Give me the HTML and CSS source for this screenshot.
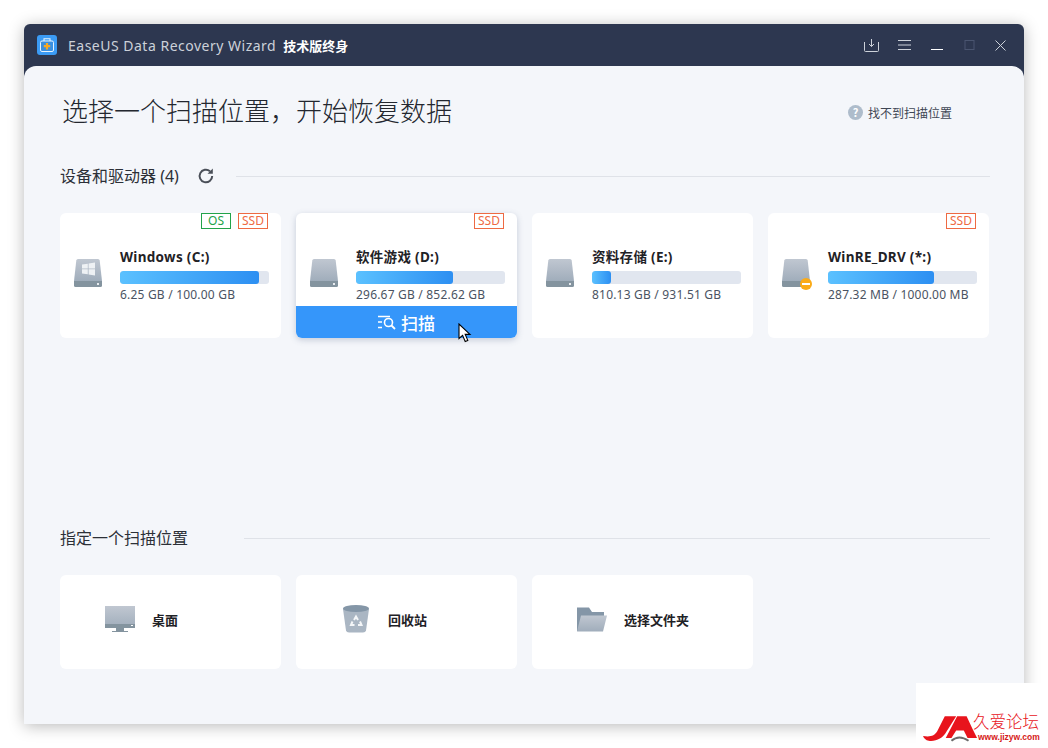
FILE: index.html
```html
<!DOCTYPE html>
<html lang="zh">
<head>
<meta charset="utf-8">
<title>EaseUS Data Recovery Wizard</title>
<link rel="stylesheet" href="styles.css">
</head>
<body>
<svg class="defs" width="0" height="0" aria-hidden="true">
  <defs>
    <linearGradient id="g" x1="0" y1="0" x2="0" y2="1"><stop offset="0" stop-color="#c0c7d1"/><stop offset="1" stop-color="#a0adbb"/></linearGradient>
    <symbol id="hdd" viewBox="0 0 28 28">
      <path d="M4 0H24Q25.500 0 25.700 1.500L28 22H0L2.300 1.500Q2.500 0 4 0Z" fill="url(#g)"/>
      <path d="M0 22H28V26.500Q28 28 26.500 28H1.500Q0 28 0 26.500Z" fill="#84949f"/>
      <rect x="23" y="24" width="2" height="2" fill="#e8ecf0"/>
    </symbol>
  </defs>
</svg>
<div class="window">
  <header class="titlebar">
    <svg class="app-icon" viewBox="0 0 20 20"><rect width="20" height="20" rx="3" fill="#3b9bf5"/><rect x="3.500" y="6" width="13" height="10.500" rx="1.500" fill="#3a8fe0" stroke="#e6f3fd" stroke-width="1"/><path d="M7 6V3.800H13V6" fill="none" stroke="#e6f3fd" stroke-width="1.100"/><path d="M10 8V14.500M6.800 11.200H13.200" stroke="#f7a823" stroke-width="2.200"/></svg>
    <span class="app-name">EaseUS Data Recovery Wizard</span>
    <span class="app-edition">技术版终身</span>
    <div class="win-controls">
      <svg class="ctl" width="15" height="13" viewBox="0 0 15 13"><path d="M.5 3V11.500Q.5 12.500 1.500 12.500H13.500Q14.500 12.500 14.500 11.500V3M7.500 0V7.500M5 5L7.500 7.500L10 5" fill="none" stroke="#cdd2da" stroke-width="1"/></svg>
      <svg class="ctl" width="13" height="12" viewBox="0 0 13 12"><path d="M0 1.500H13M0 6H13M0 10.500H13" stroke="#cdd2da" stroke-width="1"/></svg>
      <svg class="ctl" width="12" height="12" viewBox="0 0 12 12"><path d="M0 10.500H12" stroke="#ffffff" stroke-width="1"/></svg>
      <svg class="ctl" width="11" height="11" viewBox="0 0 11 11"><rect x="1" y=".5" width="9" height="9" fill="none" stroke="#4a5570" stroke-width="1"/></svg>
      <svg class="ctl" width="11" height="11" viewBox="0 0 11 11"><path d="M.5 .5L10.500 10.500M10.500 .5L.5 10.500" stroke="#cdd2da" stroke-width="1"/></svg>
    </div>
  </header>
  <main class="content">
    <div class="top">
      <h1 class="headline">选择一个扫描位置，开始恢复数据</h1>
      <a class="help"><span class="help-dot">?</span>找不到扫描位置</a>
    </div>
    <div class="section-head first">
      <span class="section-title">设备和驱动器 (4)</span>
      <svg class="refresh" width="18" height="18" viewBox="0 0 18 18"><path d="M15.200 9A6.300 6.300 0 1 1 13 4.200" fill="none" stroke="#4a4f58" stroke-width="2"/><path d="M15.800 1.500V6.800H10.500Z" fill="#4a4f58"/></svg>
      <span class="rule"></span>
    </div>
    <div class="drives">
      <article class="card drive">
        <div class="tags"><span class="tag os">OS</span><span class="tag ssd">SSD</span></div>
        <div class="drive-body">
          <svg class="hdd"><use href="#hdd"/></svg>
          <div class="drive-info">
            <div class="drive-name">Windows (C:)</div>
            <div class="bar"><div class="fill" style="width:93%"></div></div>
            <div class="drive-size">6.25 GB / 100.00 GB</div>
          </div>
        </div>
        <svg class="win-logo" width="13" height="14" viewBox="0 0 13 13"><path d="M0 2L5.800 1.200V6H0ZM6.600 1L13 0V6H6.600ZM0 6.800H5.800V11.700L0 11ZM6.600 6.800H13V13L6.600 12Z" fill="#eef1f4"/></svg>
      </article>
      <article class="card drive active">
        <div class="tags"><span class="tag ssd">SSD</span></div>
        <div class="drive-body">
          <svg class="hdd"><use href="#hdd"/></svg>
          <div class="drive-info">
            <div class="drive-name">软件游戏 (D:)</div>
            <div class="bar"><div class="fill" style="width:65%"></div></div>
            <div class="drive-size">296.67 GB / 852.62 GB</div>
          </div>
        </div>
        <div class="scan">
          <svg width="18" height="15" viewBox="0 0 18 15"><path d="M0 1.500H12M0 7H4M0 12.500H4" stroke="#fff" stroke-width="1.600"/><circle cx="10.500" cy="7.500" r="4" fill="none" stroke="#fff" stroke-width="1.600"/><path d="M13.500 10.500L17 14" stroke="#fff" stroke-width="1.800"/></svg>
          <span>扫描</span>
        </div>
        <svg class="cursor" width="14" height="20" viewBox="0 0 14 20"><path d="M1 1V15.500L4.600 12.300L7.200 18.500L9.800 17.400L7.200 11.400H12Z" fill="#fff" stroke="#000" stroke-width="1.100"/></svg>
      </article>
      <article class="card drive">
        <div class="drive-body">
          <svg class="hdd"><use href="#hdd"/></svg>
          <div class="drive-info">
            <div class="drive-name">资料存储 (E:)</div>
            <div class="bar"><div class="fill" style="width:13%"></div></div>
            <div class="drive-size">810.13 GB / 931.51 GB</div>
          </div>
        </div>
      </article>
      <article class="card drive">
        <div class="tags"><span class="tag ssd">SSD</span></div>
        <div class="drive-body">
          <svg class="hdd"><use href="#hdd"/></svg>
          <div class="drive-info">
            <div class="drive-name">WinRE_DRV (*:)</div>
            <div class="bar"><div class="fill" style="width:71%"></div></div>
            <div class="drive-size">287.32 MB / 1000.00 MB</div>
          </div>
        </div>
        <span class="minus"></span>
      </article>
    </div>
    <div class="section-head second">
      <span class="section-title">指定一个扫描位置</span>
      <span class="rule"></span>
    </div>
    <div class="places">
      <article class="card place">
        <span class="place-icon"><svg width="30" height="26" viewBox="0 0 30 26"><rect width="30" height="22" fill="url(#g)"/><rect y="18" width="30" height="4" fill="#84949f"/><rect x="26" y="19" width="2" height="1" fill="#fff"/><rect x="11" y="22" width="8" height="3" fill="#84949f"/><rect x="7" y="25" width="16" height="1" fill="#84949f"/></svg></span>
        <span class="place-name">桌面</span>
      </article>
      <article class="card place">
        <span class="place-icon"><svg width="26" height="28" viewBox="0 0 26 28"><path d="M0 4L3 25.500Q3.500 27.500 6 27.500H20Q22.500 27.500 23 25.500L26 4Z" fill="#aab6c3"/><ellipse cx="13" cy="3.500" rx="13" ry="3.500" fill="#8496a7"/><path d="M11 15L13 11.500L15 15M9.500 16.500L8 20H11.500M15 20H18.500L17 16.500" stroke="#f4f6f8" stroke-width="2" fill="none"/></svg></span>
        <span class="place-name">回收站</span>
      </article>
      <article class="card place">
        <span class="place-icon"><svg width="30" height="25" viewBox="0 0 30 25"><path d="M0 0.500H12L15 5H27V10H5V24H0Z" fill="#8496a7"/><path d="M4 8.500H30L26 24.500H0Z" fill="url(#g)"/></svg></span>
        <span class="place-name">选择文件夹</span>
      </article>
    </div>
  </main>
</div>
<aside class="watermark">
  <svg class="wm-logo" width="55" height="27" viewBox="0 0 58 28">
    <path d="M0 22C8 23 12 22 15 17L23 1H35L25 17C21 25 13 28 6 27C3 26.500 1 24.500 0 22Z" fill="#e8141c"/>
    <path d="M36 1H46L52 14L57 24H47L43 16H35L30 24H24Z" fill="#e8141c"/>
    <path d="M30 27Q38 20 48 27" fill="none" stroke="#6c6c6c" stroke-width="2"/>
  </svg>
  <div class="wm-text">
    <div class="wm-cn">久爱论坛</div>
    <div class="wm-url">www.jizyw.com</div>
  </div>
</aside>
</body>
</html>
```
FILE: styles.css
```css
* { box-sizing: border-box; }
html, body { margin: 0; height: 100%; background: #fff; }
body {
  width: 1048px;
  height: 748px;
  padding: 24px;
  overflow: hidden;
  position: relative;
  font-family: "Noto Sans", "Noto Sans CJK SC", sans-serif;
  color: #1f2530;
}
.defs { position: absolute; }
.window {
  width: 1000px;
  height: 700px;
  background: #2d3750;
  border-radius: 6px 6px 0 0;
  box-shadow: 0 2px 16px rgba(0, 0, 0, .28);
  display: flex;
  flex-direction: column;
}
.titlebar {
  height: 42px;
  flex: none;
  display: flex;
  align-items: center;
  padding: 0 18px 0 13px;
}
.app-icon { width: 20px; height: 20px; flex: none; margin-right: 11px; }
.app-name { font-size: 14px; color: #ccd1d9; letter-spacing: .5px; white-space: nowrap; }
.app-edition { font-size: 13px; font-weight: 700; color: #fff; margin-left: 7px; white-space: nowrap; }
.win-controls { margin-left: auto; display: flex; align-items: center; gap: 18px; }
.ctl { display: block; flex: none; }
.win-controls .ctl:nth-child(2) { margin-left: 1px; }
.win-controls .ctl:nth-child(3) { margin-left: 2px; }
.win-controls .ctl:nth-child(4) { margin-left: 3px; }
.win-controls .ctl:nth-child(5) { margin-left: 2px; }
.content {
  flex: 1;
  background: #f4f6fa;
  border-radius: 12px 12px 0 0;
  padding: 0 34px 0 36px;
  min-height: 0;
}
.top { display: flex; align-items: center; height: 88px; padding-left: 2px; }
.headline { margin: 0; font-size: 26px; line-height: 36px; font-weight: 300; font-family: "Noto Sans CJK SC", sans-serif; color: #23272f; }
.help { margin-left: auto; margin-right: 38px; display: flex; align-items: center; gap: 5px; font-size: 12px; color: #3f4654; position: relative; top: 2px; font-family: "Noto Sans CJK SC", sans-serif; }
.help-dot { width: 15px; height: 15px; border-radius: 50%; background: #aebccb; color: #fff; font-size: 11px; font-weight: 700; line-height: 15px; text-align: center; }
.section-head { display: flex; align-items: center; height: 24px; }
.section-head.first { margin-top: 10px; }
.section-head.second { margin-top: 188px; }
.section-title { font-size: 16px; line-height: 24px; font-family: "Noto Sans", "Noto Sans CJK SC", sans-serif; color: #2c3037; white-space: nowrap; }
.refresh { margin-left: 18px; flex: none; }
.rule { flex: 1; height: 1px; background: #dfe2e8; margin-left: 21px; }
.second .rule { margin-left: 56px; }
.drives, .places { display: grid; grid-template-columns: repeat(4, 221px); column-gap: 15px; }
.drives { margin-top: 25px; }
.places { margin-top: 25px; }
.card { background: #fff; border-radius: 6px; position: relative; }
.drive { height: 125px; display: flex; flex-direction: column; }
.drive.active { box-shadow: 0 2px 6px rgba(60, 80, 120, .25); }
.drive-body { flex: 1; display: flex; padding: 35px 12px 0 14px; gap: 18px; }
.hdd { width: 28px; height: 28px; flex: none; margin-top: 11px; }
.drive-info { width: 149px; }
.drive-name { font-size: 13.500px; line-height: 18px; font-weight: 700; color: #1f2226; letter-spacing: .3px; white-space: nowrap; }
.bar { height: 13px; margin-top: 5px; background: #e1e6ef; border-radius: 3px; overflow: hidden; }
.fill { height: 100%; border-radius: 3px; background: linear-gradient(90deg, #5bc1ff, #2d8ff2); }
.drive-size { margin-top: 3px; font-size: 12px; line-height: 16px; color: #4a5362; letter-spacing: .2px; white-space: nowrap; }
.tags { position: absolute; top: 0; right: 13px; display: flex; gap: 7px; }
.tag { width: 30px; height: 16px; border: 1px solid; font-size: 12px; line-height: 14px; text-align: center; background: #fff; }
.tag.os { color: #22a34a; border-color: #22a34a; }
.tag.ssd { color: #ee6a43; border-color: #ee6a43; }
.scan { height: 32px; flex: none; background: #3596fa; border-radius: 0 0 6px 6px; display: flex; align-items: center; justify-content: center; gap: 5px; color: #fff; font-size: 17px; font-weight: 500; font-family: "Noto Sans CJK SC", sans-serif; }
.cursor { position: absolute; left: 162px; top: 110px; }
.win-logo { position: absolute; left: 22px; top: 49px; }
.minus { position: absolute; left: 32px; top: 65px; width: 12px; height: 12px; border-radius: 50%; background: #fbab18 linear-gradient(#fff, #fff) center / 8px 2px no-repeat; }
.place { height: 94px; display: flex; align-items: center; padding: 0 0 6px 40px; }
.place-icon { width: 40px; flex: none; display: flex; justify-content: center; }
.place-icon svg { display: block; }
.place-name { margin-left: 12px; font-size: 13px; font-weight: 700; color: #1f2226; font-family: "Noto Sans CJK SC", sans-serif; }
.watermark {
  position: absolute;
  left: 916px;
  top: 683px;
  width: 128px;
  height: 60px;
  background: #fff;
  display: flex;
  align-items: flex-end;
  padding-left: 7px;
}
.wm-logo { flex: none; display: block; margin-bottom: 1px; }
.wm-text { margin-left: -5px; width: 70px; padding-bottom: 2px; }
.wm-cn { font-size: 16.500px; line-height: 18px; color: #e8141c; font-weight: 300; font-family: "Liberation Sans", "Noto Sans CJK SC", sans-serif; white-space: nowrap; }
.wm-url { margin-top: 2px; font-size: 8.500px; line-height: 8px; font-weight: 700; color: #d61a20; padding-left: 5px; white-space: nowrap; font-family: "Liberation Sans", sans-serif; }
```
